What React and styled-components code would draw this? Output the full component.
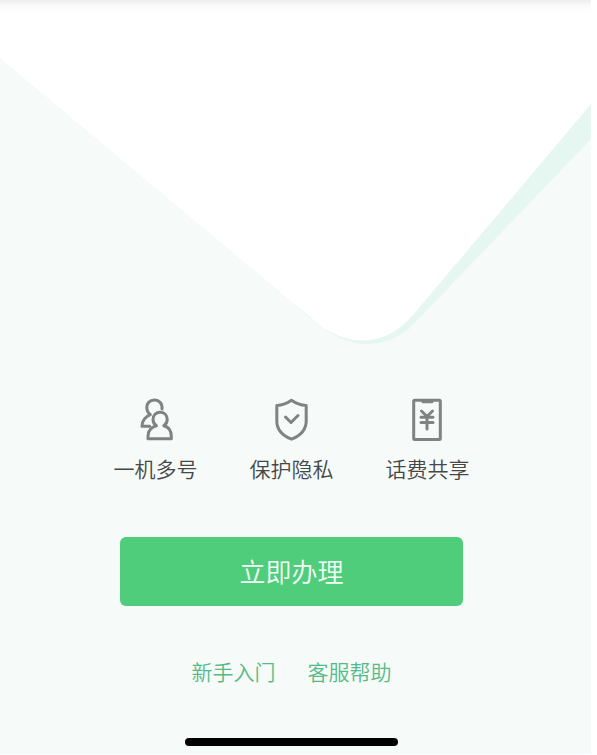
import styled, { createGlobalStyle } from "styled-components";

const features = [
    { name: "一机多号", icon: <UsersIcon /> },
    { name: "保护隐私", icon: <ShieldIcon /> },
    { name: "话费共享", icon: <PhoneIcon /> },
]

const App = () => {

    return(
        <>
            <GlobalStyle />
            <Page>
                <Screen>
                    <Hero viewBox="0 0 591 350" preserveAspectRatio="none" aria-hidden="true">
                        <defs>
                            <linearGradient id="topShade" x1="0" y1="0" x2="0" y2="1">
                                <stop offset="0" stopColor="#eeeeee" />
                                <stop offset="0.4" stopColor="#fafafa" />
                                <stop offset="1" stopColor="#ffffff" />
                            </linearGradient>
                        </defs>
                        <path d="M300 310 L322 327 Q366 360 408 330 L591 139 L591 90 Z" fill="#e5f7f0" />
                        <path d="M0 0 H591 V104 L413 315 Q394 337 370 340 Q346 343 322 327 L0 58 Z" fill="#ffffff" />
                        <rect width="591" height="14" fill="url(#topShade)" />
                    </Hero>
                    <Content>
                        <FeatureList>
                            {features.map((v) => (
                                <Feature key={v.name}>
                                    {v.icon}
                                    <FeatureName>{v.name}</FeatureName>
                                </Feature>
                            ))}
                        </FeatureList>
                        <ApplyButton type="button">立即办理</ApplyButton>
                        <LinkRow>
                            <HelpLink href="#guide">新手入门</HelpLink>
                            <HelpLink href="#service">客服帮助</HelpLink>
                        </LinkRow>
                        <HomeBar />
                    </Content>
                </Screen>
            </Page>
        </>
    )
}

function UsersIcon() {
    return(
        <Icon viewBox="0 0 44 44" aria-hidden="true">
            <path d="M28 11 C28.6 5.6 25.2 2 20.4 2 C15.8 2 12.8 5.2 12.8 9.4 C12.8 12.6 14 14.8 16.4 16.6 C11.4 18.6 8.2 21.8 8 28.2 H15.6" />
            <path d="M22.4 27.8 C20.2 26.2 19 24.2 19 21.4 C19 17.2 22 14.2 26.1 14.2 C30.2 14.2 33.2 17.2 33.2 21.4 C33.2 24.2 32 26.2 29.8 27.8 C34.6 29 37.3 32.4 37.3 38.4 V40.8 H14 V38.4 C14 32.4 17.6 29 22.4 27.8 Z" />
        </Icon>
    )
}

function ShieldIcon() {
    return(
        <Icon viewBox="0 0 44 44" aria-hidden="true">
            <path d="M21.5 2.2 C17 5.3 12 7 6.8 7.6 V23 C6.8 31 12 37.4 21.5 41.2 C31 37.4 36.2 31 36.2 23 V7.6 C31 7 26 5.3 21.5 2.2 Z" />
            <path d="M15.5 19 L21 24.5 L28 17.5" />
        </Icon>
    )
}

function PhoneIcon() {
    return(
        <Icon viewBox="0 0 44 44" aria-hidden="true">
            <rect x="7.7" y="2.2" width="26.6" height="39.2" rx="1" />
            <path d="M17 3.8 H26" />
            <path d="M15.5 13 L21 18.5 L26.5 13 M21 18.5 V31 M15 19.2 H27 M15 24.4 H27" />
        </Icon>
    )
}

const GlobalStyle = createGlobalStyle`
* {
    box-sizing: border-box;
}
body {
    margin: 0;
    background-color: #ffffff;
    font-family: "Noto Sans CJK SC", sans-serif;
    font-weight: 350;
}
`

const Page = styled.div`
padding: 0 6px 1px 0;
`
const Screen = styled.main`
min-height: calc(100vh - 1px);
display: flex;
flex-direction: column;
background-color: #f6faf9;
`
const Hero = styled.svg`
display: block;
width: 100%;
height: 350px;
`
const Content = styled.div`
display: flex;
flex-direction: column;
align-items: center;
padding: 48px 8px 8px 0;
`
const FeatureList = styled.ul`
display: flex;
gap: 52px;
margin: 0;
padding: 0;
list-style: none;
`
const Feature = styled.li`
display: flex;
flex-direction: column;
align-items: center;
gap: 10px;
`
const Icon = styled.svg`
width: 44px;
height: 44px;
fill: none;
stroke: #7f8381;
stroke-width: 3;
stroke-linecap: round;
stroke-linejoin: round;
`
const FeatureName = styled.span`
font-size: 21px;
line-height: 32px;
color: #454847;
`
const ApplyButton = styled.button`
width: 59%;
height: 69px;
margin-top: 53px;
padding: 0 0 2px;
border: none;
border-radius: 6px;
background-color: #50cd7b;
color: #f4fff8;
font-family: inherit;
font-size: 26px;
font-weight: 350;
cursor: pointer;
`
const LinkRow = styled.nav`
display: flex;
gap: 32px;
margin-top: 49px;
`
const HelpLink = styled.a`
font-size: 21px;
line-height: 32px;
color: #54bb86;
text-decoration: none;
`
const HomeBar = styled.div`
width: 213px;
height: 8px;
margin-top: 51px;
border-radius: 4px;
background-color: #000000;
`

export default App;
